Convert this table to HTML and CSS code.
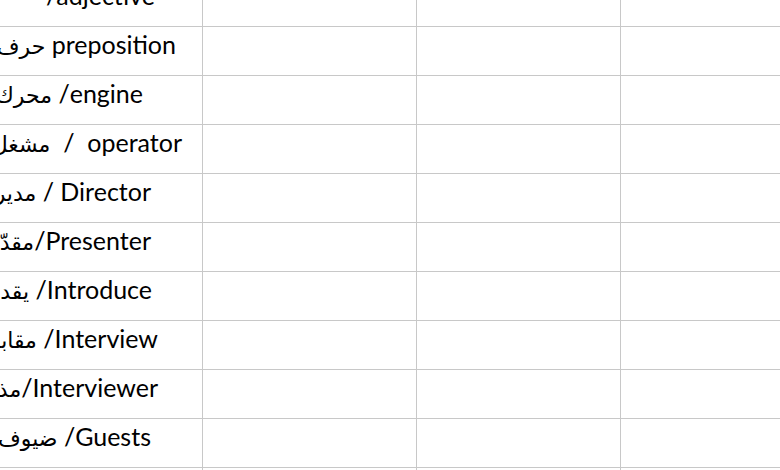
FILE: index.html
```html
<!DOCTYPE html>
<html lang="en">
<head>
<meta charset="utf-8">
<title>Vocabulary table</title>
<link rel="stylesheet" href="styles.css">
</head>
<body>
<div class="sheet">
  <div class="cell term t-adj"><span class="word">/adjective</span></div><div class="cell"></div><div class="cell"></div><div class="cell"></div>
  <div class="cell term t-prep"><span class="word"><span class="ar">حرف جر</span> preposition</span></div><div class="cell"></div><div class="cell"></div><div class="cell"></div>
  <div class="cell term t-eng"><span class="word"><span class="ar">محرك</span> /engine</span></div><div class="cell"></div><div class="cell"></div><div class="cell"></div>
  <div class="cell term t-op"><span class="word"><span class="ar">مشغل</span> &nbsp;/ &nbsp;operator</span></div><div class="cell"></div><div class="cell"></div><div class="cell"></div>
  <div class="cell term t-dir"><span class="word"><span class="ar">مدير</span> / Director</span></div><div class="cell"></div><div class="cell"></div><div class="cell"></div>
  <div class="cell term t-pre"><span class="word"><span class="ar">مقدّم</span>/Presenter</span></div><div class="cell"></div><div class="cell"></div><div class="cell"></div>
  <div class="cell term t-intro"><span class="word"><span class="ar">يقدم</span> /Introduce</span></div><div class="cell"></div><div class="cell"></div><div class="cell"></div>
  <div class="cell term t-iv"><span class="word"><span class="ar">مقابلة</span> /Interview</span></div><div class="cell"></div><div class="cell"></div><div class="cell"></div>
  <div class="cell term t-ivr"><span class="word"><span class="ar">مذيع</span>/Interviewer</span></div><div class="cell"></div><div class="cell"></div><div class="cell"></div>
  <div class="cell term t-guest"><span class="word"><span class="ar">ضيوف</span> /Guests</span></div><div class="cell"></div><div class="cell"></div><div class="cell"></div>
  <div class="cell term"><span class="word"></span></div><div class="cell"></div><div class="cell"></div><div class="cell"></div>
</div>
</body>
</html>
```

FILE: styles.css
```css
html, body {
  margin: 0;
  padding: 0;
  background: #ffffff;
  overflow: hidden;
}

body {
  width: 780px;
  height: 470px;
  font-family: Lato, "DejaVu Sans", sans-serif;
  color: #000000;
}

.sheet {
  display: grid;
  grid-template-columns: 203px 214px 204px 240px;
  grid-auto-rows: 49px;
  margin-top: -22px;
}

.cell {
  box-sizing: border-box;
  border-right: 1px solid #c8c8c8;
  border-bottom: 1px solid #c8c8c8;
}

.term {
  display: flex;
  justify-content: flex-end;
  align-items: flex-start;
  padding-top: 2px;
  padding-right: var(--end, 40px);
  min-width: 0;
}

.word {
  white-space: nowrap;
  font-size: 25px;
  line-height: 30px;
  direction: ltr;
  unicode-bidi: isolate;
}

.ar {
  font-family: "DejaVu Sans", sans-serif;
  font-size: 22px;
}

.t-adj { --end: 47px; }
.t-prep { --end: 26px; }
.t-eng { --end: 59px; }
.t-op { --end: 20px; }
.t-dir { --end: 51px; }
.t-pre { --end: 51px; }
.t-intro { --end: 50px; }
.t-iv { --end: 44px; }
.t-ivr { --end: 44px; }
.t-guest { --end: 51px; }
```
